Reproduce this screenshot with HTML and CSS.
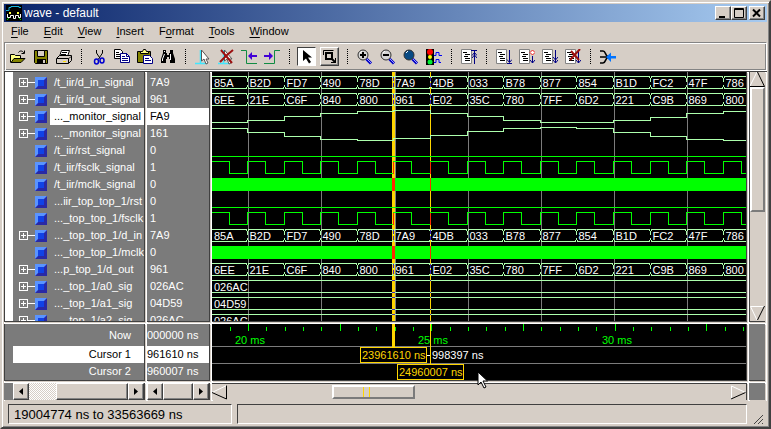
FILE: index.html
```html
<!DOCTYPE html>
<html lang="en">
<head>
<meta charset="utf-8">
<title>wave - default</title>
<link rel="stylesheet" href="styles.css">
</head>
<body>
<svg class="defs" aria-hidden="true">
  <symbol id="doc" viewBox="0 0 16 16"><path fill="#fff" stroke="#848484" d="M.5.5h10v14H.5z"/><path stroke="#000" d="M2 3.5h4M4 5.5h5M3 7.5h4M4 9.5h5M4 11.5h5"/></symbol>
  <symbol id="lens" viewBox="0 0 16 16"><path d="M9.500 10l4.500 4.500" stroke="#0000c6" stroke-width="3"/><path d="M10 10l4 4" stroke="#9c9cff"/><circle cx="6" cy="6" r="5" stroke="#303030"/><path d="M3 4l2-2" stroke="#fff"/></symbol>
  <symbol id="pointer" viewBox="0 0 12 18"><path d="M1 1v13l3-3 3 6 2-1-3-6h4.500z"/></symbol>
</svg>
<main class="window">
  <header class="titlebar">
    <svg class="app-icon" viewBox="0 0 16 16"><path fill="#000" d="M0 0h16v16H0z"/><path stroke="#18b5de" fill="none" d="M0 5.500h3V2.500h2V1.500h8v1h2"/><path fill="#ffff42" d="M3 7h2v2H3zM11 7h2v2h-2z"/><path stroke="#fff" fill="none" d="M1.500 9v3.500h3v-2h3v3h2v-3h3v2h2V9"/><path stroke="#0c0" d="M1 15l2-2M15 15l-2-2"/></svg>
    <h1>wave - default</h1>
    <div class="window-buttons">
      <button aria-label="Minimize"><svg viewBox="0 0 12 11"><path fill="#000" d="M2 8h6v2H2z"/></svg></button>
      <button aria-label="Maximize"><svg viewBox="0 0 12 11"><path fill="none" stroke="#000" d="M1.500.500h9v9h-9zM1 1.500h10"/></svg></button>
      <button class="close" aria-label="Close"><svg viewBox="0 0 12 11"><path stroke="#000" stroke-width="2" d="M2 1.500l7 7M9 1.500l-7 7"/></svg></button>
    </div>
  </header>
  <nav class="menu">
    <a href="#"><u>F</u>ile</a><a href="#"><u>E</u>dit</a><a href="#"><u>V</u>iew</a><a href="#"><u>I</u>nsert</a><a href="#">F<u>o</u>rmat</a><a href="#"><u>T</u>ools</a><a href="#"><u>W</u>indow</a>
  </nav>
  <div class="toolbar" role="toolbar">
    <button aria-label="Open"><svg viewBox="0 0 16 16"><path fill="#ffff84" stroke="#000" d="M.500 13.500v-8h4l1 1h5v3"/><path fill="#848400" stroke="#000" d="M1 13.500l3-4h11l-4 4z"/><path fill="none" stroke="#000" d="M8.500 3.500c1-2 4-2 5 0v1M11.500 4.500h3v-3"/></svg></button>
    <button aria-label="Save"><svg viewBox="0 0 16 16"><path fill="#848400" stroke="#000" d="M1.500 1.500h13v13h-12l-1-1z"/><path fill="#d6cec6" stroke="#000" d="M4.500 1.500h7v6h-7z"/><path fill="#000" d="M4 10h9v5H4z"/><path fill="#d6cec6" d="M10 11h2v3h-2z"/></svg></button>
    <button aria-label="Print"><svg viewBox="0 0 16 16"><path fill="#fff" stroke="#000" d="M5.500 1.500h8l-2 6h-8z"/><path stroke="#000" d="M6 3.500h5M5 5.500h5"/><path fill="#d6cec6" stroke="#000" d="M.500 9.500l3-3h12v5l-3 3H.500z"/><path stroke="#000" d="M1 9.500h11.500v5M13 9.500l2-2" fill="none"/><path stroke="#ffe000" d="M7 12.500h3"/></svg></button>
    <i></i>
    <button aria-label="Cut"><svg viewBox="0 0 16 16"><path fill="none" stroke="#000" d="M5.500 1v3l4 6M11.500 1v3L7.500 10"/><ellipse cx="5.500" cy="12.500" rx="2" ry="2.500" fill="none" stroke="#0000d0" stroke-width="1.500"/><ellipse cx="11" cy="11.500" rx="2" ry="2.500" fill="none" stroke="#0000d0" stroke-width="1.500"/></svg></button>
    <button aria-label="Copy"><svg viewBox="0 0 16 16"><path fill="#fff" stroke="#000" d="M.500.500h6l2 2v7h-8z"/><path stroke="#000" d="M2 3.500h3M2 5.500h4M2 7.500h4"/><path fill="#fff" stroke="#000084" d="M6.500 4.500h6l3 3v6h-9z"/><path fill="none" stroke="#000084" d="M12.500 4v3.500H15M8 7.500h3M8 9.500h6M8 11.500h6"/></svg></button>
    <button aria-label="Paste"><svg viewBox="0 0 16 16"><path fill="#848400" stroke="#000" d="M.500 2.500h13v11H.500z"/><path fill="#ffff84" stroke="#000" d="M3.500 4.500v-2h2l1-2h2l1 2h2v2z"/><path fill="#fff" stroke="#000084" d="M6.500 6.500h6l3 3v5h-9z"/><path stroke="#000084" d="M8 9.500h4M8 11.500h6"/></svg></button>
    <button aria-label="Find"><svg viewBox="0 0 16 16"><path d="M3 1h3v3h1v2h2V4h1V1h3v3l2 6v4h-5v-4H9V8H7v2H6v4H1v-4l2-6z"/><path fill="none" stroke="#fff" d="M4.500 5L2.500 10v2M10.500 5v6M4.500 2v1"/></svg></button>
    <i></i>
    <button aria-label="Add cursor"><svg viewBox="0 0 16 16"><path stroke="#42e7ff" stroke-width="1.500" fill="none" d="M5.500 1v13M0 14.500h12"/><path fill="#fff" stroke="#555" d="M6.500 1v11l2.500-2 2 5 2-1-2-4h3z"/></svg></button>
    <button aria-label="Delete cursor"><svg viewBox="0 0 16 16"><path stroke="#42e7ff" stroke-width="1.500" fill="none" d="M5.500 1v13M0 14.500h12"/><path fill="#fff" stroke="#555" d="M6.500 1v11l2.500-2 2 5 2-1-2-4h3z"/><path stroke="#9c1010" stroke-width="2" fill="none" d="M3 1l11 13M15 1L9 6l-7 7"/></svg></button>
    <button aria-label="Previous transition"><svg viewBox="0 0 16 16"><path stroke="#108c42" fill="none" d="M0 1.500h5.500v13H16"/><path fill="#4200d6" d="M7 7l4-4v3h5v2h-5v3z"/></svg></button>
    <button aria-label="Next transition"><svg viewBox="0 0 16 16"><path stroke="#108c42" fill="none" d="M0 14.500h10.500v-13H16"/><path fill="#4200d6" d="M9 7L5 3v3H0v2h5v3z"/></svg></button>
    <i></i>
    <button class="pressed" aria-pressed="true" aria-label="Select mode"><svg viewBox="0 0 16 16"><path d="M4 1v11l3-2.500 3 5 2-1.500-3-4.500h4z"/></svg></button>
    <button class="raised" aria-label="Zoom mode"><svg viewBox="0 0 16 16"><path fill="none" stroke="#000" d="M1.500 6V1.500h10M13 13.500H9M13.500 9v5"/><path fill="none" stroke="#000" stroke-width="2" d="M4 4h6v6H4zM9 9l4 4"/></svg></button>
    <i></i>
    <button aria-label="Zoom in"><svg viewBox="0 0 16 16" fill="#d6d6d6"><use href="#lens"/><path stroke="#000" stroke-width="2" d="M3 6h6M6 3v6"/></svg></button>
    <button aria-label="Zoom out"><svg viewBox="0 0 16 16" fill="#d6d6d6"><use href="#lens"/><path stroke="#000" stroke-width="2" d="M3 6h6"/></svg></button>
    <button aria-label="Zoom full"><svg viewBox="0 0 16 16" fill="#084a84"><use href="#lens"/></svg></button>
    <button aria-label="Stop drawing"><svg viewBox="0 0 16 16"><path d="M0 0h8v16H0z"/><circle cx="4" cy="3" r="3" fill="red"/><circle cx="4" cy="8" r="2" fill="#ff0"/><circle cx="4" cy="13" r="2.500" fill="#0e3"/><path stroke="#0000f7" fill="none" d="M8 6.500h2v-3h3v3h3M8 13.500h2v-3h3v3h2"/></svg></button>
    <i></i>
    <button aria-label="Restart"><svg viewBox="0 0 16 16"><use href="#doc"/><path stroke="#000084" fill="none" d="M10 1.500h6M13.500 2v13M11 6.500l2.500-3 2.500 3M11 9l2.500-3L16 9"/></svg></button>
    <i></i>
    <button aria-label="Run"><svg viewBox="0 0 16 16"><use href="#doc"/><path stroke="#000084" fill="none" d="M13.500 1v12M11 10.500l2.500 3 2.500-3M11 14.500h5"/></svg></button>
    <button aria-label="Continue run"><svg viewBox="0 0 16 16"><use href="#doc"/><path stroke="#f02020" fill="#fff" d="M13.500 1L16 3.500 13.500 6 11 3.500z"/><path stroke="#000084" fill="none" d="M13.500 7v7M11 11l2.500 3 2.500-3"/></svg></button>
    <button aria-label="Run all"><svg viewBox="0 0 16 16"><use href="#doc"/><path stroke="#000084" fill="none" d="M13.500 1v13M11 8l2.500 3L16 8M11 11l2.500 3 2.500-3"/></svg></button>
    <button aria-label="Break"><svg viewBox="0 0 16 16"><use href="#doc"/><path stroke="#000084" fill="none" d="M13.500 1v13M11 11l2.500 3 2.500-3"/><path stroke="#9c1010" stroke-width="2" d="M15 0L5 11M6 2l8 9"/></svg></button>
    <i></i>
    <button aria-label="Expand"><svg viewBox="0 0 16 16"><path stroke="#000" stroke-width="1.500" fill="none" d="M0 2h3c3 0 2 5 5 5.500M0 14h3c3 0 2-5 5-5.500M0 8h7"/><path fill="#0073ff" d="M6 8l5-4.500V7h5v2.500h-5V13z"/></svg></button>
  </div>

  <section class="panes">
    <div class="pane names"><ul id="names"></ul></div>
    <div class="pane values"><ul id="values"></ul></div>
    <div class="pane wave"><svg id="wave" role="img" aria-label="Waveforms"></svg></div>
    <div class="pane motif vertical" role="scrollbar" aria-label="Scroll signals" aria-controls="names" aria-valuenow="0">
      <button aria-label="Scroll up"><svg viewBox="0 0 15 15"><path class="light" d="M0 14L7 0"/><path class="dark" d="M7.500 0l7 14.500H0"/></svg></button>
      <span class="thumb"></span><span class="track"></span>
      <button aria-label="Scroll down"><svg viewBox="0 0 15 15"><path class="light" d="M14 .500H.500L7 14"/><path class="dark" d="M14.500 0L7.500 14"/></svg></button>
    </div>

    <ul class="pane cursor-names"><li>Now</li><li class="on">Cursor 1</li><li>Cursor 2</li></ul>
    <ul class="pane cursor-values"><li>000000 ns</li><li class="on">961610 ns</li><li>960007 ns</li></ul>
    <div class="pane wave"><svg id="ruler" role="img" aria-label="Time ruler and cursors"></svg></div>
    <div class="pane"></div>

    <div class="pane bar names-bar" role="scrollbar" aria-label="Scroll names" aria-controls="names" aria-valuenow="100">
      <button aria-label="Left"><svg viewBox="0 0 4 7"><path d="M4 0v7L0 3.500z"/></svg></button><span class="dots"></span><span class="thumb"></span><button aria-label="Right"><svg viewBox="0 0 4 7"><path d="M0 0v7l4-3.500z"/></svg></button>
    </div>
    <div class="pane bar" role="scrollbar" aria-label="Scroll values" aria-controls="values" aria-valuenow="0">
      <button aria-label="Left"><svg viewBox="0 0 4 7"><path d="M4 0v7L0 3.500z"/></svg></button><span class="thumb"></span><button aria-label="Right"><svg viewBox="0 0 4 7"><path d="M0 0v7l4-3.500z"/></svg></button>
    </div>
    <div class="pane motif horizontal" role="scrollbar" aria-label="Scroll time" aria-controls="wave" aria-valuenow="25">
      <button aria-label="Earlier"><svg viewBox="0 0 15 14"><path class="light" d="M0 7L14.500 0"/><path class="dark" d="M14.500 0v13.500L0 7"/></svg></button>
      <span class="before"></span><span class="thumb"><svg class="marks" viewBox="0 0 36 10"><path fill="#ffd600" d="M29 0h1v10h-1zM35 0h1v10h-1z"/></svg></span><span class="track"></span>
      <button aria-label="Later"><svg viewBox="0 0 15 14"><path class="light" d="M.500 14V.500L14.500 7"/><path class="dark" d="M0 13.500L14.500 7"/></svg></button>
    </div>
    <div class="pane"></div>
  </section>

  <footer class="status">
    <output>19004774 ns to 33563669 ns</output>
    <output class="message"></output>
    <svg class="grip" viewBox="0 0 10 10"><path stroke="#444" d="M0 10L9 1M4 10l5-5M8 10l1-1"/></svg>
  </footer>
</main>
<svg class="mouse" viewBox="0 0 12 18" fill="#fff" stroke="#000"><use href="#pointer"/></svg>
<script src="wave.js"></script>
</body>
</html>
```
FILE: styles.css
```css
* { box-sizing: border-box; }
body {
  margin: 0;
  font: 11px/17px "Liberation Sans", Arial, sans-serif;
  color: #000;
}
ul { margin: 0; padding: 0; list-style: none; }
button { margin: 0; padding: 0; border: 0; border-radius: 0; background: #d6cec6; color: #000; }
svg { display: block; }
.defs { display: none; }
.window {
  display: flex;
  flex-direction: column;
  height: 100vh;
  padding: 2px;
  background: #d6cec6;
  border: 2px solid;
  border-color: #d6cec6 #404040 #404040 #d6cec6;
  box-shadow: inset 1px 1px #fff, inset -1px -1px #848484;
}

.titlebar {
  display: flex;
  align-items: center;
  height: 18px;
  flex: none;
  padding: 0 2px;
  background: linear-gradient(90deg, #0a246a, #a6caf0);
}
.app-icon { width: 16px; height: 16px; }
.titlebar h1 { margin: 0 0 0 2px; flex: 1; font-size: 12px; font-weight: normal; color: #fff; }
.window-buttons { display: flex; }
.window-buttons button {
  display: grid;
  place-items: center;
  width: 16px;
  height: 14px;
}
.window-buttons svg { width: 12px; height: 11px; }
.window-buttons .close { margin-left: 2px; }
.window-buttons button, .bar button, .bar .thumb, .raised {
  border: 1px solid;
  border-color: #fff #404040 #404040 #fff;
  box-shadow: inset -1px -1px #848484;
}

.menu {
  display: flex;
  gap: 15px;
  flex: none;
  height: 20px;
  padding: 0 7px;
  line-height: 18px;
}
.menu a { color: #000; text-decoration: none; }
.menu u { text-underline-offset: 2px; }

.toolbar {
  display: flex;
  align-items: center;
  flex: none;
  height: 29px;
  padding: 0 1px;
  border: 1px solid;
  border-color: #848484 #fff #fff #848484;
  box-shadow: inset 1px 1px #fff, inset -1px -1px #848484;
}
.toolbar button {
  display: grid;
  place-items: center;
  width: 19px;
  height: 19px;
  margin: 0 2px;
  flex: none;
}
.toolbar svg { width: 16px; height: 16px; }
.toolbar i { width: 12px; height: 15px; flex: none; background: repeating-linear-gradient(#000 0 1px, transparent 1px 2px) center / 1px 100% no-repeat; }
.toolbar .pressed { background: #fff; border: 1px solid; border-color: #404040 #fff #fff #404040; }

.panes {
  display: grid;
  grid-template-columns: 143px 65px minmax(0, 1fr) 18px;
  grid-template-rows: minmax(0, 1fr) 59px 17px;
  flex: 1;
  min-height: 0;
  background: #fff;
  border-top: 1px solid #404040;
  border-bottom: 1px solid #fff;
}
.pane {
  overflow: hidden;
  min-width: 0;
  margin: 0 2px 2px 0;
  background: #7b7b7b;
  color: #fff;
  border: 0 solid #404040;
  border-width: 0 1px 1px 0;
  box-shadow: 1px 1px #d6cec6;
}
.pane:nth-child(n+9) { border-bottom: 0; margin-bottom: 0; }
.pane:nth-child(4n) { border-right: 0; }
.wave { background: #000; }
.wave svg { width: 100%; height: 100%; shape-rendering: crispEdges; }
.wave text { font: 11px "Liberation Sans", Arial, sans-serif; }
.names, .cursor-names { border-left-width: 1px; }
.names ul { border-left: 8px solid #fff; padding-top: 2px; min-height: 100%; }
.names li { display: flex; align-items: center; height: 17px; padding-left: 6px; white-space: nowrap; }
.names li span { flex: 1; padding-left: 4px; margin-left: 3px; height: 17px; }
.names button {
  width: 9px;
  height: 9px;
  flex: none;
  border: 1px solid #fff;
  background: linear-gradient(#fff, #fff) center / 5px 1px no-repeat, linear-gradient(#fff, #fff) center / 1px 5px no-repeat;
}
.names hr { width: 7px; margin: 0; border: 0; border-top: 1px solid #fff; }
.names hr.none { width: 16px; border-color: transparent; }
.names i {
  width: 12px;
  height: 12px;
  flex: none;
  background: #1042e7;
  border: 3px solid;
  border-color: #5a94ff #2929a5 #2929a5 #5a94ff;
}
.names .on span, .on { background: #fff; color: #000; }
.names .on { background: none; }
.values ul { padding-top: 2px; }
.values li { height: 17px; padding-left: 3px; }

.cursor-names, .cursor-values { text-align: right; }
.cursor-names { padding-left: 8px; }
.cursor-names li { padding-right: 13px; }
.cursor-values li { padding-right: 12px; white-space: nowrap; }
.cursor-names li:first-child, .cursor-values li:first-child { height: 22px; line-height: 22px; }

.bar { display: flex; }
.names-bar { padding-left: 9px; }
.bar button { display: grid; place-items: center; width: 16px; flex: none; }
.bar button svg { width: 4px; height: 7px; }
.bar .thumb { flex: 1; background: #d6cec6; }
.bar .dots { width: 27px; background: repeating-conic-gradient(#fff 0 25%, #d6cec6 0 50%) 0 0 / 2px 2px; }

.motif { display: grid; background: #d6cec6; }
.motif button { width: 15px; height: 15px; }
.motif button svg { width: 100%; height: 100%; fill: none; }
.light { stroke: #fff; }
.dark { stroke: #000; }
.motif .thumb { background: #d6cec6; border: 2px solid; border-color: #fff #7b7b7b #7b7b7b #fff; }
.vertical { grid-template-rows: 15px 57fr 43fr 15px; border-left-width: 1px; }
.horizontal { grid-template-columns: 15px 105fr 83fr 315fr 15px; border-top-width: 1px; padding-top: 1px; }
.horizontal .thumb { height: 14px; }
.marks { width: 36px; height: 10px; shape-rendering: crispEdges; }

.status { display: flex; gap: 5px; flex: none; height: 24px; padding: 3px 1px 1px 4px; }
.status output {
  width: 224px;
  padding-left: 5px;
  font-size: 13px;
  line-height: 19px;
  border: 1px solid;
  border-color: #404040 #fff #fff #404040;
}
.status .message { flex: 1; }
.grip { width: 10px; height: 10px; align-self: flex-end; margin: 0 2px 0 2px; }
.mouse { position: absolute; left: 477px; top: 371px; width: 12px; height: 18px; }
```
FILE: wave.js
```js
const signals = [
  ['/t_iir/d_in_signal', '7A9', 'bus', 'in'],
  ['/t_iir/d_out_signal', '961', 'bus', 'out'],
  ['..._monitor_signal', 'FA9', 'analog', [122,120,116,113,111,110,113,116,120,122,122,120,117,113,111]],
  ['..._monitor_signal', '161', 'analog', [128,132,136,139,140,138,135,131,128,127,128,132,136,139,140]],
  ['/t_iir/rst_signal', '0', 'low'],
  ['/t_iir/fsclk_signal', '1', 'clock'],
  ['/t_iir/mclk_signal', '0', 'solid'],
  ['...iir_top_top_1/rst', '0', 'low'],
  ['..._top_top_1/fsclk', '1', 'clock'],
  ['..._top_top_1/d_in', '7A9', 'bus', 'in'],
  ['..._top_top_1/mclk', '0', 'solid'],
  ['...p_top_1/d_out', '961', 'bus', 'out'],
  ['..._top_1/a0_sig', '026AC', 'bus', '026AC'],
  ['..._top_1/a1_sig', '04D59', 'bus', '04D59'],
  ['..._top_1/a2_sig', '026AC', 'bus', '026AC']
];
const buses = {
  in: '85A B2D FD7 490 78D 7A9 4DB 033 B78 877 854 B1D FC2 47F 786'.split(' '),
  out: '6EE 21E C6F 840 800 961 E02 35C 780 7FF 6D2 221 C9B 869 800'.split(' ')
};
const PALE = '#adffad', GREEN = '#00ff00', GOLD = '#ffd600', GRAY = '#7b7b7b', BLUE = '#4229b5', RED = '#ff2900';
const ROW = 17, SAMPLES = 15, WIDTH = '2000';
const edge = n => Math.floor(35.5 + (n - 1) * 36.6);
const line = (d, color, w = 1) => `<path d="${d}" fill="none" stroke="${color}" stroke-width="${w}"/>`;
const rect = (x, y, w, h, color) => `<rect x="${x}" y="${y}" width="${w}" height="${h}" fill="${color}"/>`;
const text = (x, y, s, color) => `<text x="${x}" y="${y}" fill="${color}">${s}</text>`;

let art = '';
for (let n = 1; n <= 13; n += 2) if (n !== 5) art += rect(edge(n) + 1, 0, 1, 250, GRAY);
art += rect(183, 0, 1, 250, GRAY);
art += rect(180, 0, 3, 250, GOLD) + rect(218, 0, 1, 250, GOLD);

signals.forEach(([name, value, kind, data], i) => {
  const top = 2 + i * ROW, hi = top + 2.5, lo = top + 14.5;
  const isBus = kind === 'bus';
  if (isBus && buses[data]) {
    buses[data].forEach((v, n) => {
      const a = n ? edge(n) + .5 : -3, b = edge(n + 1) + .5;
      art += line(`M${a + 1} ${hi}H${b - 1}L${b} ${hi + 3}V${hi + 5}M${b} ${hi + 8}V${hi + 9}L${b - 1} ${lo}H${a + 1}L${a} ${lo - 3}V${lo - 4}M${a} ${hi + 5}V${hi + 3}L${a + 1} ${hi}`, PALE);
      art += text(n ? a + 2 : 2, top + 13, v, '#fff');
    });
  } else if (isBus) {
    art += line(`M0 ${hi}H${WIDTH}M0 ${lo}H${WIDTH}`, PALE) + text(2, top + 13, data, '#fff');
  } else if (kind === 'analog') {
    let d = `M0 ${data[0] - 71.5}`;
    for (let n = 1; n < SAMPLES; n++) d += `H${edge(n) + .5}V${data[n] - 71.5}`;
    art += line(d + `H${WIDTH}`, PALE);
  } else if (kind === 'low') {
    art += rect(0, top + 14, WIDTH, 1, GREEN);
  } else if (kind === 'clock') {
    let d = `M0 ${hi}H17.5V${lo}`;
    for (let n = 1; n < SAMPLES; n++) d += `H${edge(n) + .5}V${hi}H${edge(n) + 18.5}V${lo}`;
    art += line(d + `H${WIDTH}`, GREEN);
    art += line(`M181.5 ${hi}V${lo}M218.500 ${hi}V${lo}`, RED);
  } else {
    art += rect(0, top + 2, WIDTH, 13, GREEN) + rect(180, top + 2, 3, 13, RED) + rect(218, top + 2, 1, 13, RED);
  }
  if (isBus && buses[data]) {
    art += `<path d="M181.500 ${hi}V${lo}M218.500 ${hi}V${lo}" stroke="${BLUE}" stroke-dasharray="4 2"/>`;
  } else if (isBus) {
    art += line(`M180 ${hi}h3M180 ${lo}h3M218 ${hi}h1M218 ${lo}h1`, BLUE);
  }
});
document.getElementById('wave').innerHTML = art;

let time = '';
for (let n = 0; n <= 28; n++) {
  const major = n % 5 === 1;
  time += rect(Math.floor(18.2 + n * 18.33), major ? 0 : 3, 1, major ? 7 : 4, GREEN);
}
time += rect(0, 22, '100%', 1, GRAY) + rect(0, 39, '100%', 1, GRAY);
time += text(23, 20, '20 ms', GREEN) + text(206, 20, '25 ms', GREEN) + text(390, 20, '30 ms', GREEN);
time += rect(180, 0, 3, 23, GOLD) + rect(218, 0, 1, 40, GOLD);
time += `<rect x="148.500" y="23.500" width="66" height="15" stroke="${GOLD}"/><rect x="185.500" y="40.500" width="66" height="15" stroke="${GOLD}"/>`;
time += text(150, 35, '23961610 ns', GOLD) + text(187, 52, '24960007 ns', GOLD) + text(220, 35, '998397 ns', '#fff');
time += rect(215, 31, 3, 1, '#fff');
document.getElementById('ruler').innerHTML = time;

document.getElementById('names').innerHTML = signals.map(([name, , kind], i) => {
  const expandable = kind === 'bus' || kind === 'analog';
  const branch = expandable ? `<button aria-label="Expand ${name}"></button><hr>` : '<hr class="none">';
  return `<li${i === 2 ? ' class="on"' : ''}>${branch}<i></i><span>${name}</span></li>`;
}).join('');
document.getElementById('values').innerHTML = signals.map((s, i) => `<li${i === 2 ? ' class="on"' : ''}>${s[1]}</li>`).join('');
```
